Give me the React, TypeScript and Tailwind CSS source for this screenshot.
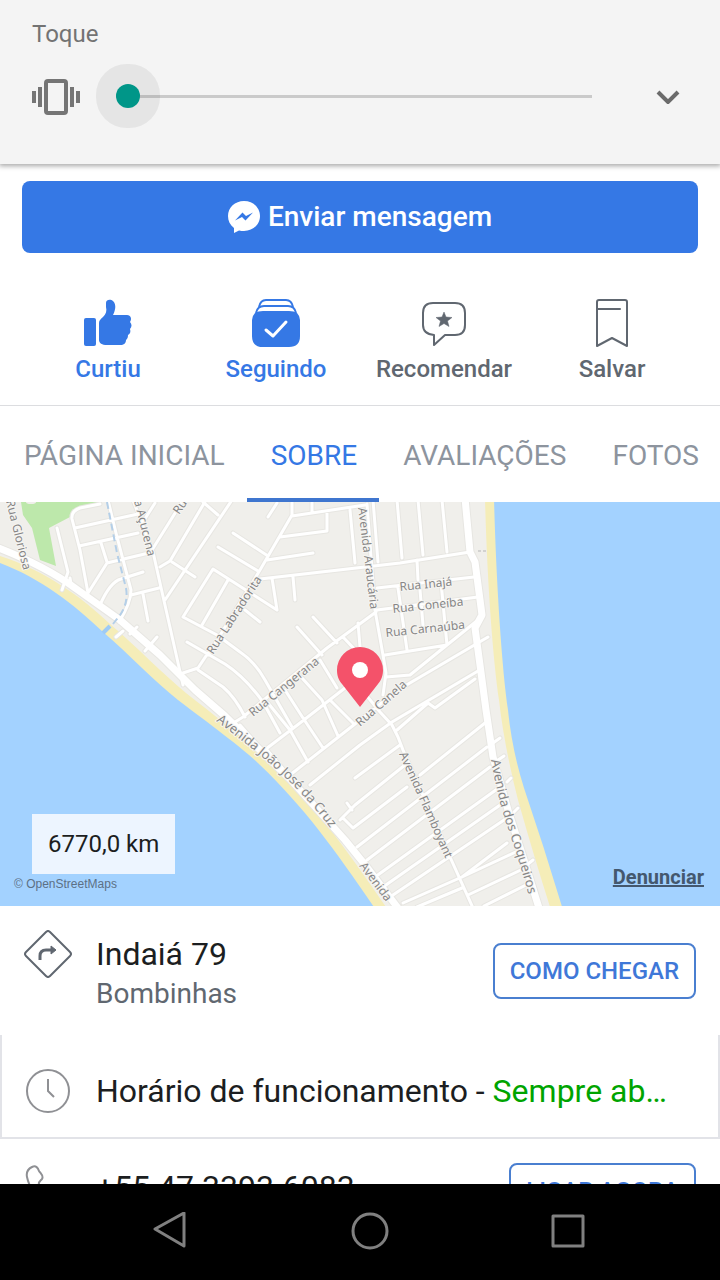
import { useState } from 'react';
import type { ReactNode } from 'react';

interface Action {
  label: string;
  active: boolean;
  icon: ReactNode;
}

const minorRoads = [
  // west blocks
  'M57 528 L68 572 L62 590',
  'M100 504 L80 508 Q71 511 72 519 L80 550 L88 593',
  'M108 500 L116 533 L131 590 Q131 603 119 622',
  'M75 528 L138 514',
  'M79 546 L138 533',
  'M88 593 L107 563 L153 552',
  'M101 543 L107 562',
  'M100 605 Q110 582 121 579 L143 572',
  'M131 595 L159 588',
  'M143 594 L148 621',
  'M133 500 L153 552 L183 685',
  'M116 637 L123 631',
  'M130 634 L137 627',
  'M145 651 L157 637',
  'M70 578 L71 584',
  'M152 550 L182 502',
  'M141 525 L155 503',
  'M160 567 L170 561 L206 500',
  'M172 562 L195 577',
  'M165 600 L232 500',
  'M203 502 L218 515',
  'M233 533 L268 556',
  'M218 547 L258 571',
  'M277 610 L213 569 L183 617 L217 635 L240 652 Q255 662 265 680 L292 727',
  'M277 610 L272 578',
  'M228 580 L202 625',
  'M245 610 L260 622',
  'M293 577 L295 600',
  'M187 642 L225 664 Q245 677 263 702 L280 733',
  'M183 673 L198 668 L208 653',
  'M198 670 L223 687 Q235 697 245 717',
  // centre and north
  'M208 655 L260 570 L292 515 L292 500',
  'M292 516 L365 505',
  'M280 537 L327 531 L327 513',
  'M267 560 L313 553',
  'M268 517 L277 503',
  'M312 500 V512',
  'M260 579 L400 563 L470 552',
  'M350 510 L355 563',
  'M373 500 L378 562',
  'M397 500 L402 558',
  'M418 500 L423 555',
  'M442 500 L447 552',
  'M417 560 L418 580',
  'M377 588 L474 577',
  'M377 610 L478 597',
  'M385 655 L447 645 L478 620',
  'M398 588 L407 650',
  'M420 590 L423 625',
  'M441 582 L447 645',
  'M367 504 L375 610 L383 655 L386 673 L383 695',
  'M386 677 L410 675 L447 645',
  'M376 612 L327 648 L243 717 L235 722',
  'M313 617 L337 643',
  'M297 627 L322 655',
  'M358 623 L360 647',
  'M343 637 L360 655',
  'M262 752 L300 723 L345 688',
  'M290 775 L355 724 L398 690 L488 637',
  'M310 785 L360 745 L392 722 L478 671',
  'M397 730 L428 703 L435 708 L475 679',
  'M240 725 L262 750',
  'M268 703 L290 730 L308 762',
  'M285 690 L303 718 L323 748',
  'M302 678 L322 700 L338 736',
  'M320 660 L337 688',
  'M330 700 L353 723',
  'M267 750 L290 777',
  // blocks between the two avenues in the south
  'M362 690 L380 712 L392 725 L398 737 L403 750 L425 800 L450 857 L473 908',
  'M355 778 L400 745',
  'M340 820 L355 805 L405 765',
  'M347 803 L352 810',
  'M343 818 L353 828 L407 787',
  'M420 775 L485 723',
  'M357 847 L487 747',
  'M367 860 L490 767',
  'M375 877 L500 787',
  'M383 887 L503 803',
  'M390 897 L507 818',
  'M403 903 L462 877 L507 843',
  'M417 907 L462 888',
  'M462 877 L520 850',
  'M468 895 L525 868',
  'M484 906 L528 884',
  'M493 743 L500 738',
  'M498 760 L504 756',
  'M507 782 L511 778',
  'M514 812 L518 808',
  'M528 864 L533 860',
];

const westAvenue =
  'M-4 547 Q45 566 75 588 L120 620 L160 655 L195 690 L225 716 L260 750 L290 779 L318 810 L345 840 L366 866 L398 908';
const eastAvenue = 'M465 498 L470 552 L475 562 L482 615 L475 628 L480 665 L486 710 L493 757 L508 810 L524 860 L539 908';

const streetLabels = [
  { text: 'Rua Gloriosa', x: 6, y: 501, angle: 76 },
  { text: 'a Açucena', x: 134, y: 501, angle: 76 },
  { text: 'Ru', x: 179, y: 515, angle: -55 },
  { text: 'Rua Labradorita', x: 213, y: 655, angle: -57 },
  { text: 'Avenida Araucária', x: 358, y: 508, angle: 83 },
  { text: 'Rua Inajá', x: 400, y: 591, angle: -6 },
  { text: 'Rua Coneíba', x: 393, y: 613, angle: -6 },
  { text: 'Rua Carnaúba', x: 386, y: 637, angle: -6 },
  { text: 'Rua Cangerana', x: 253, y: 717, angle: -39 },
  { text: 'Rua Canela', x: 360, y: 727, angle: -41 },
  { text: 'Avenida Flamboyant', x: 399, y: 754, angle: 66 },
  { text: 'Avenida', x: 359, y: 866, angle: 53 },
];

function StreetMap() {
  return (
    <svg viewBox="0 502 720 404" className="block w-full" role="img" aria-label="Mapa">
      <rect x="0" y="500" width="720" height="410" fill="#a3d2ff" />
      <path
        d="M0 498 H494 C496 580 502 670 508 710 Q512 750 524 788 Q545 850 563 910 H376 C335 850 305 808 260 765 C245 750 215 728 178 700 C155 682 130 655 103 632 C75 605 40 578 0 563 Z"
        fill="#f5edb8"
      />
      <path
        d="M0 498 H485 C487 580 493 660 499 700 Q504 745 518 800 Q535 860 551 910 H388 C347 850 311 800 268 760 C252 745 222 721 186 693 C163 674 138 648 110 624 C82 597 44 570 0 556 Z"
        fill="#f0efeb"
      />
      <path d="M21 502 L23 515 L32 528 L40 560 L56 566 L49 528 L70 517 L77 508 L101 502 Z" fill="#bde8ab" />
      <ellipse cx="31" cy="502" rx="5" ry="2" fill="#f0efeb" />
      <g fill="none" stroke="#e7e6e2" strokeLinecap="round" strokeLinejoin="round">
        <path d={minorRoads.join(' ')} strokeWidth="5" />
        <path d={westAvenue} strokeWidth="9" />
        <path d={eastAvenue} strokeWidth="9" />
      </g>
      <g fill="none" stroke="#ffffff" strokeLinecap="round" strokeLinejoin="round">
        <path d={minorRoads.join(' ')} strokeWidth="3" />
        <path d={westAvenue} strokeWidth="7" />
        <path d={eastAvenue} strokeWidth="7" />
      </g>
      <path
        d="M107 502 L117 553 L126 588 Q129 605 117 619 L113 624"
        fill="none"
        stroke="#b4cfe8"
        strokeWidth="2"
        strokeDasharray="7 4"
      />
      <path d="M110 626 L103 633" stroke="#9ecbf5" strokeWidth="4" />
      <path d="M478 551 H487" stroke="#b5b5b5" strokeWidth="1" strokeDasharray="3 2" />
      <defs>
        <path id="cruz" d="M216 721 Q262 755 290 782 Q318 810 336 836 L350 856" />
        <path id="coqueiros" d="M491 760 Q496 790 505 820 Q516 850 529 896 L536 920" />
      </defs>
      <g
        className="font-['Noto_Sans',sans-serif] text-[12px]"
        fill="#868686"
        stroke="#f6f5f2"
        strokeWidth="2"
        strokeLinejoin="round"
        paintOrder="stroke"
      >
        {streetLabels.map((label) => (
          <text key={label.text} transform={`translate(${label.x} ${label.y}) rotate(${label.angle})`}>
            {label.text}
          </text>
        ))}
        <text className="text-[13px]">
          <textPath href="#cruz">Avenida João José da Cruz</textPath>
        </text>
        <text className="text-[13px]">
          <textPath href="#coqueiros">Avenida dos Coqueiros</textPath>
        </text>
      </g>
      <path
        d="M360 707 L342 684 C338 679 337 675 337 670 A23 23 0 0 1 383 670 C383 675 382 679 378 684 Z"
        fill="#f4526a"
      />
      <circle cx="360" cy="670" r="8" fill="#fff" />
    </svg>
  );
}

const actions: Action[] = [
  {
    label: 'Curtiu',
    active: true,
    icon: (
      <svg viewBox="0 0 48 48" className="h-12 w-12" fill="currentColor">
        <rect x="0" y="19" width="12" height="28" rx="2" />
        <path d="M15 24 C15 21 17 20 19 18 C22 15 23 12 22 8 V4 C22 0 27 0 29 2 C33 6 31 12 29 16 H43 C47 16 48 20 46 23 C48 25 48 28 46 30 C47 33 46 35 44 36 C44 39 43 40 42 41 C42 44 40 46 36 46 H23 C18 46 15 44 15 41 Z" />
      </svg>
    ),
  },
  {
    label: 'Seguindo',
    active: true,
    icon: (
      <svg viewBox="0 0 48 48" className="h-12 w-12" fill="none" stroke="currentColor">
        <path d="M7 8 C8 3 10 1 14 1 H34 C38 1 40 3 41 8" strokeWidth="2" />
        <path d="M4 14 C5 9 8 7 12 7 H36 C40 7 43 9 44 14" strokeWidth="2" />
        <path
          d="M3 14 Q6 12 11 12 H37 Q42 12 45 14 Q48 17 48 21 V37 Q48 48 37 48 H11 Q0 48 0 37 V21 Q0 17 3 14 Z"
          fill="currentColor"
          stroke="none"
        />
        <path d="M14 31 L21 37 L34 23" stroke="#fff" strokeWidth="3" strokeLinecap="round" strokeLinejoin="round" />
      </svg>
    ),
  },
  {
    label: 'Recomendar',
    active: false,
    icon: (
      <svg viewBox="0 0 48 48" className="h-12 w-12" fill="none" stroke="currentColor" strokeLinejoin="round">
        <path
          d="M13 4 H35 Q45 4 45 14 V26 Q45 36 35 36 H25 L14 46 V36 Q3 35 3 26 V14 Q3 4 13 4 Z"
          strokeWidth="2"
        />
        <path
          d="M24 13 L26 18 L32 18.500 L27.500 22 L29 27.500 L24 24.500 L19 27.500 L20.500 22 L16 18.500 L22 18 Z"
          fill="currentColor"
          strokeWidth="0.500"
        />
      </svg>
    ),
  },
  {
    label: 'Salvar',
    active: false,
    icon: (
      <svg viewBox="0 0 48 48" className="h-12 w-12" fill="none" stroke="currentColor" strokeLinejoin="round" strokeLinecap="round">
        <path d="M11 1 H37 Q39 1 39 3 V47 L24 39 L9 47 V3 Q9 1 11 1 Z" strokeWidth="2" />
        <path d="M10 10 H32" strokeWidth="2" />
      </svg>
    ),
  },
];

const tabs = ['PÁGINA INICIAL', 'SOBRE', 'AVALIAÇÕES', 'FOTOS'];

function VolumePanel() {
  const [volume, setVolume] = useState(0);

  return (
    <section className="relative z-10 shrink-0 bg-[#f4f4f4] pt-4 pb-9 shadow-[0_1px_5px_1px_rgba(0,0,0,0.35)]">
      <label htmlFor="ring-volume" className="block px-8 text-[24px] leading-9 text-[#737373]">
        Toque
      </label>
      <div className="mt-3 flex h-16 items-center pr-7 pl-8">
        <svg viewBox="0 0 48 48" className="h-12 w-12 shrink-0" fill="#757575">
          <rect x="14" y="9" width="20" height="32" rx="2" fill="none" stroke="#757575" strokeWidth="4" />
          <rect x="0" y="19" width="4" height="12" />
          <rect x="6" y="15" width="4" height="20" />
          <rect x="38" y="15" width="4" height="20" />
          <rect x="44" y="19" width="4" height="12" />
        </svg>
        <input
          id="ring-volume"
          type="range"
          min={0}
          max={7}
          value={volume}
          onChange={(e) => setVolume(Number(e.target.value))}
          className="ml-9 h-[3px] min-w-0 flex-1 appearance-none bg-[#cacaca] [&::-webkit-slider-thumb]:h-6 [&::-webkit-slider-thumb]:w-6 [&::-webkit-slider-thumb]:appearance-none [&::-webkit-slider-thumb]:rounded-full [&::-webkit-slider-thumb]:bg-[#009688] [&::-webkit-slider-thumb]:shadow-[0_0_0_20px_rgba(0,0,0,0.06)]"
        />
        <button aria-label="Expandir" className="ml-13 flex h-12 w-12 shrink-0 items-center justify-center">
          <svg viewBox="0 0 24 16" className="h-4 w-6" fill="none" stroke="#6b6b6b" strokeWidth="4">
            <path d="M2 4 L12 14 L22 4" />
          </svg>
        </button>
      </div>
    </section>
  );
}

export default function App() {
  const [tab, setTab] = useState('SOBRE');

  return (
    <div className="flex h-screen flex-col overflow-hidden bg-white font-[Roboto,sans-serif] text-[#1c1e21]">
      <VolumePanel />

      <main className="min-h-0 flex-1 overflow-hidden">
        <div className="px-[22px] pt-[17px]">
          <button className="flex h-18 w-full items-center justify-center gap-2 rounded-lg bg-[#3578e5] text-[28px] font-medium text-white">
            <svg viewBox="0 0 32 32" className="h-8 w-8">
              <path
                d="M16 0 C7 0 0 6.500 0 15 C0 20 2 24 6 27 V32 L11 29.500 C13 30 14 30 16 30 C25 30 32 23.500 32 15 C32 6.500 25 0 16 0 Z"
                fill="#fff"
              />
              <path d="M7 19.500 L14.500 11.500 L18 15 L25 11.500 L17.500 19.500 L14 16 Z" fill="#3578e5" />
            </svg>
            Enviar mensagem
          </button>
        </div>

        <div className="grid grid-cols-4 border-b border-[#dcdde0] px-6 pt-[46px] pb-5">
          {actions.map((action) => (
            <button
              key={action.label}
              className={`flex flex-col items-center gap-1.5 text-[24px] leading-8 font-medium ${
                action.active ? 'text-[#3578e5]' : 'text-[#606770]'
              }`}
            >
              {action.icon}
              {action.label}
            </button>
          ))}
        </div>

        <nav className="flex h-24 overflow-hidden">
          {tabs.map((name) => (
            <button
              key={name}
              onClick={() => setTab(name)}
              className={`shrink-0 border-b-4 pt-2 pr-[22px] pl-6 text-[28px] ${
                tab === name ? 'border-[#3f76cf] text-[#3578e5]' : 'border-transparent text-[#8d949e]'
              }`}
            >
              {name}
            </button>
          ))}
        </nav>

        <div className="relative">
          <StreetMap />
          <div className="absolute bottom-8 left-8 bg-[#edf5ff] px-4 text-[24px] leading-[60px]">6770,0 km</div>
          <span className="absolute bottom-3 left-3.5 font-['Liberation_Sans',sans-serif] text-[12px] leading-5 text-[#5c7085]">
            © OpenStreetMaps
          </span>
          <a href="#denunciar" className="absolute right-4 bottom-[15px] text-[20px] leading-7 font-bold text-[#44586e] underline">
            Denunciar
          </a>
        </div>

        <div className="flex items-start px-6 pt-6 pb-[21px]">
          <svg viewBox="0 0 48 48" className="h-12 w-12 shrink-0" fill="none" stroke="#606770" strokeWidth="2" strokeLinejoin="round">
            <path d="M22 2 Q24 0 26 2 L46 22 Q48 24 46 26 L26 46 Q24 48 22 46 L2 26 Q0 24 2 22 Z" />
            <path d="M16 30 V26 Q16 20 22 20 H29" strokeWidth="3" />
            <path d="M27 16 L32 20 L27 24 Z" fill="#606770" strokeWidth="1" />
          </svg>
          <div className="min-w-0 flex-1 pt-1 pl-6">
            <div className="text-[32px] leading-10">Indaiá 79</div>
            <div className="text-[28px] leading-10 text-[#606770]">Bombinhas</div>
          </div>
          <button className="mt-[13px] h-14 shrink-0 rounded-lg border-2 border-[#4a7fd0] px-[15px] text-[24px] font-medium text-[#3f78d8]">
            COMO CHEGAR
          </button>
        </div>

        <div className="flex items-center border-x-2 border-b-2 border-[#e2e3e8] px-[22px] pt-8 pb-[22px]">
          <svg viewBox="0 0 48 48" className="h-12 w-12 shrink-0" fill="none" stroke="#8f9094" strokeWidth="2">
            <circle cx="24" cy="24" r="21" />
            <path d="M24 12 V24 L30 30" />
          </svg>
          <div className="min-w-0 flex-1 truncate pl-6 text-[32px] leading-[48px]">
            Horário de funcionamento - <span className="text-[#00a400]">Sempre ab…</span>
          </div>
        </div>

        <div className="flex items-start px-6 py-6">
          <svg viewBox="0 0 48 48" className="h-12 w-12 shrink-0" fill="none" stroke="#8f9094" strokeWidth="2" strokeLinejoin="round">
            <path d="M8 4 C12 2 14 5 15 8 C17 11 20 13 18 16 C16 18 14 19 15 22 C18 28 22 31 27 34 C30 35 31 32 34 31 C38 32 42 34 44 37 C44 42 40 45 36 45 C18 43 6 28 3 14 C2 9 4 6 8 4 Z" />
          </svg>
          <div className="min-w-0 flex-1 pt-1 pl-6 text-[32px] leading-10">+55 47 3393-6083</div>
          <button className="h-14 shrink-0 rounded-lg border-2 border-[#4a7fd0] px-[15px] text-[24px] font-medium text-[#3f78d8]">
            LIGAR AGORA
          </button>
        </div>
      </main>

      <footer className="grid h-24 shrink-0 grid-cols-3 items-center bg-black pr-13 pl-18 text-[#808080]">
        <button aria-label="Voltar" className="flex justify-center">
          <svg viewBox="0 0 40 40" className="h-10 w-10" fill="none" stroke="currentColor" strokeWidth="3" strokeLinejoin="round">
            <path d="M33 1 V34 L4 17 Z" />
          </svg>
        </button>
        <button aria-label="Início" className="flex justify-center">
          <svg viewBox="0 0 40 40" className="h-10 w-10" fill="none" stroke="currentColor" strokeWidth="3">
            <circle cx="20" cy="19" r="17" />
          </svg>
        </button>
        <button aria-label="Recentes" className="flex justify-center">
          <svg viewBox="0 0 40 40" className="h-10 w-10" fill="none" stroke="currentColor" strokeWidth="3" strokeLinejoin="round">
            <rect x="4" y="4" width="30" height="30" />
          </svg>
        </button>
      </footer>
    </div>
  );
}
